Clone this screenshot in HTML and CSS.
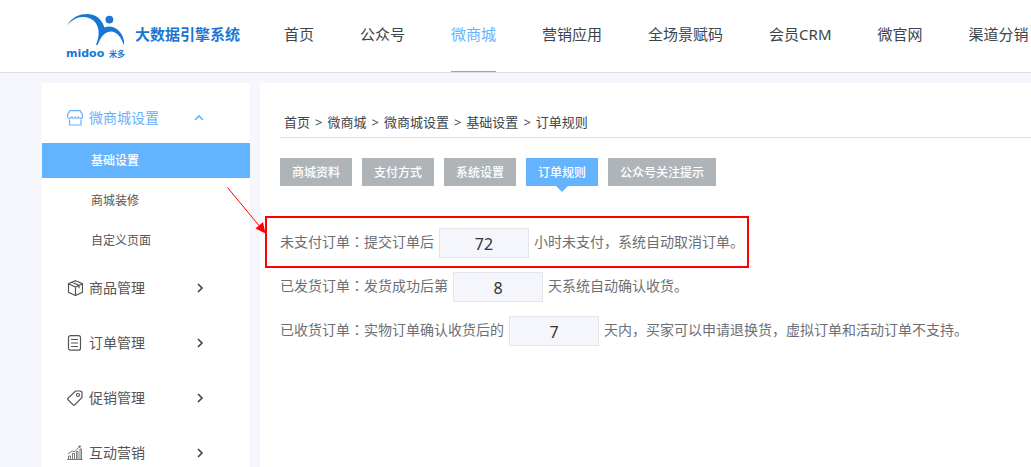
FILE: index.html
```html
<!DOCTYPE html>
<html lang="zh-CN">
<head>
<meta charset="utf-8">
<title>大数据引擎系统</title>
<link rel="stylesheet" href="styles.css">
</head>
<body>
<div class="app">
  <header class="header">
    <a class="brand" href="#">
      <svg class="logo" viewBox="0 0 60 46" role="img" aria-label="midoo 米多">
        <path class="logo-mark" d="M0 12.500C5 4 12.500 1 20 1C29 1 34.500 6 37.500 14.500C42 12.500 47.500 13.500 51.500 17.500C56 22 57.600 27 57 32.500C54.500 25 50.500 18.500 43.500 18.500C37 19 34 24 30.500 32H29C31 27 32 22.500 31.500 17.500C30.500 9.500 25 4 16 4C9.500 4 5 7 0 12.500Z"/>
        <circle class="logo-mark" cx="42.400" cy="6.600" r="3.900"/>
        <text class="logo-word" x="-1" y="44">midoo</text>
        <text class="logo-cn" x="42" y="44">米多</text>
      </svg>
      <span class="brand-name">大数据引擎系统</span>
    </a>
    <nav class="nav">
      <a href="#">首页</a>
      <a href="#">公众号</a>
      <a class="current" href="#">微商城</a>
      <a href="#">营销应用</a>
      <a href="#">全场景赋码</a>
      <a href="#">会员CRM</a>
      <a href="#">微官网</a>
      <a href="#">渠道分销</a>
    </nav>
  </header>
  <div class="body">
    <aside class="sidebar">
      <a class="group open" href="#">
        <svg class="icon" viewBox="0 0 16 16"><path d="M3 .7h10l2.500 4v1.800c0 2.500-3.800 2.500-4.200 0c-.5 2.300-3 2.300-3.300 0c-.3 2.300-2.800 2.300-3.300 0c-.4 2.500-4.200 2.500-4.200 0v-1.800zM2.500 9.500v5.500h11.500V9.500"/></svg>
        <span>微商城设置</span>
        <svg class="chevron" viewBox="0 0 10 10"><path d="M1 7l4-4 4 4"/></svg>
      </a>
      <div class="sub">
        <a class="selected" href="#">基础设置</a>
        <a href="#">商城装修</a>
        <a href="#">自定义页面</a>
      </div>
      <a class="group" href="#">
        <svg class="icon" viewBox="0 0 16 16"><path d="M8.500.7l7 3v8.600l-7 3.200-7-3.200V3.700zM1.500 3.700l7 3.300 7-3.300M8.500 7v8.500M5 2.200l7 3.200v2.800"/></svg>
        <span>商品管理</span>
        <svg class="chevron" viewBox="0 0 10 10"><path d="M4 1l4 4-4 4"/></svg>
      </a>
      <a class="group" href="#">
        <svg class="icon" viewBox="0 0 16 16"><rect x="1.500" y=".7" width="12" height="14.500" rx="2"/><path d="M4 4.500h7M4 8h7M4 11.500h7"/></svg>
        <span>订单管理</span>
        <svg class="chevron" viewBox="0 0 10 10"><path d="M4 1l4 4-4 4"/></svg>
      </a>
      <a class="group" href="#">
        <svg class="icon" viewBox="0 0 16 16"><path d="M8.500 1h5l1.500 1v5.500L7.500 15.200h-1L.7 9.500v-1z"/><circle cx="11" cy="5" r="1.500"/></svg>
        <span>促销管理</span>
        <svg class="chevron" viewBox="0 0 10 10"><path d="M4 1l4 4-4 4"/></svg>
      </a>
      <a class="group" href="#">
        <svg class="icon thin" viewBox="0 0 16 16"><path d="M0 14.500h15.500M1.500 14v-3h2v3M5.500 14V8.500h2V14M9.500 14V6.500h1.500V14M13 14V4h1.500v10M1 9l4-3 3 .500L13 1"/><circle cx="12.800" cy="1.500" r=".8"/></svg>
        <span>互动营销</span>
        <svg class="chevron" viewBox="0 0 10 10"><path d="M4 1l4 4-4 4"/></svg>
      </a>
    </aside>
    <main class="main">
      <div class="crumbs">
        <a href="#">首页</a><span>&gt;</span><a href="#">微商城</a><span>&gt;</span><a href="#">微商城设置</a><span>&gt;</span><a href="#">基础设置</a><span>&gt;</span><a href="#">订单规则</a>
      </div>
      <div class="tabs">
        <button type="button">商城资料</button>
        <button type="button">支付方式</button>
        <button type="button">系统设置</button>
        <button type="button" class="active">订单规则</button>
        <button type="button">公众号关注提示</button>
      </div>
      <form class="rules">
        <div class="rule">
          <label for="unpaid">未支付订单<span class="colon" lang="zh-TW">：</span>提交订单后</label>
          <input id="unpaid" type="text" value="72">
          <span>小时未支付，系统自动取消订单。</span>
          <div class="callout">
            <svg class="arrow" viewBox="0 0 40 48"><path class="arrow-line" d="M.5 1.500L34 42"/><path class="arrow-head" d="M38.500 47.500L28.500 42.500L36 36Z"/></svg>
          </div>
        </div>
        <div class="rule">
          <label for="shipped">已发货订单<span class="colon" lang="zh-TW">：</span>发货成功后第</label>
          <input id="shipped" type="text" value="8">
          <span>天系统自动确认收货。</span>
        </div>
        <div class="rule">
          <label for="received">已收货订单<span class="colon" lang="zh-TW">：</span>实物订单确认收货后的</label>
          <input id="received" type="text" value="7">
          <span>天内，买家可以申请退换货，虚拟订单和活动订单不支持。</span>
        </div>
      </form>
    </main>
  </div>
</div>
</body>
</html>
```
FILE: styles.css
```css
* {
  box-sizing: border-box;
}

body {
  margin: 0;
  background: #f6f7fc;
  color: #3d444d;
  font-family: "Noto Sans", "Noto Sans CJK SC", sans-serif;
  font-size: 14px;
}

a {
  color: inherit;
  text-decoration: none;
}

.app {
  display: flex;
  flex-direction: column;
  height: 100vh;
  overflow: hidden;
}

.header {
  display: flex;
  flex: none;
  height: 73px;
  padding-left: 67px;
  background: #fff;
  border-bottom: 1px solid #dcdfe3;
}

.brand {
  display: flex;
  flex: none;
  align-items: flex-start;
  gap: 8px;
  margin-right: 44px;
  color: #1b76d2;
}

.logo {
  width: 60px;
  height: 46px;
  margin-top: 13px;
  overflow: visible;
}

.logo-mark {
  fill: #1877d5;
}

.logo-word {
  fill: #1877d5;
  font: bold 11px "DejaVu Sans", sans-serif;
}

.logo-cn {
  fill: #1877d5;
  font: bold 8px "Noto Sans CJK SC", sans-serif;
}

.brand-name {
  font-size: 15px;
  font-weight: bold;
  line-height: 68px;
}

.nav {
  display: flex;
  gap: 46px;
  font-size: 15px;
  line-height: 68px;
  white-space: nowrap;
}

.nav a {
  height: 72px;
}

.nav .current {
  color: #64b3ff;
  border-bottom: 1px solid #64b3ff;
}

.body {
  display: flex;
  flex: 1;
  gap: 10px;
  min-height: 0;
  padding: 10px 0 0 42px;
}

.sidebar {
  display: flex;
  flex: none;
  flex-direction: column;
  gap: 5px;
  width: 208px;
  padding-top: 10px;
  overflow: hidden;
  background: #fff;
  color: #555;
}

.group {
  display: flex;
  flex: none;
  align-items: center;
  gap: 6px;
  height: 50px;
  padding: 0 46px 0 25px;
}

.group span {
  padding-bottom: 2px;
}

.group.open {
  margin-bottom: -5px;
  color: #64b3ff;
}

.icon {
  width: 16px;
  height: 16px;
  fill: none;
  stroke: currentColor;
  stroke-width: 1.2;
}

.thin {
  stroke-width: 0.8;
}

.chevron {
  width: 10px;
  height: 10px;
  margin-left: auto;
  fill: none;
  stroke: #3d444d;
  stroke-width: 1.6;
}

.open .chevron {
  stroke: #64b3ff;
}

.sub {
  display: flex;
  flex: none;
  flex-direction: column;
  gap: 5px;
  font-size: 12px;
  line-height: 35px;
}

.sub a {
  padding-left: 49px;
}

.sub .selected {
  background: #64b3ff;
  color: #fff;
  font-weight: 500;
}

.main {
  flex: 1;
  min-width: 0;
  padding: 24px 0 0 20px;
  background: #fff;
}

.crumbs {
  display: flex;
  gap: 5px;
  padding: 0 4px;
  border-bottom: 1px solid #dcdfe3;
  font-size: 13px;
  line-height: 30px;
}

.tabs {
  display: flex;
  gap: 10px;
  margin-top: 20px;
}

.tabs button {
  position: relative;
  height: 28px;
  padding: 0 12px;
  border: 0;
  background: #afb4b8;
  color: #fff;
  font: 500 12px "Noto Sans", "Noto Sans CJK SC", sans-serif;
}

.tabs .active {
  background: #64b3ff;
}

.tabs .active::after {
  content: "";
  position: absolute;
  top: 100%;
  left: 50%;
  margin-left: -6px;
  border: 6px solid transparent;
  border-top-color: #64b3ff;
  border-bottom: 0;
}

.rules {
  display: flex;
  flex-direction: column;
  align-items: flex-start;
  gap: 14px;
  margin-top: 42px;
  color: #6c7075;
}

.rule {
  position: relative;
  display: flex;
  gap: 5px;
  line-height: 28px;
  white-space: nowrap;
}

.colon {
  font-family: "Noto Sans CJK TC", sans-serif;
  line-height: 1;
}

.rule input {
  width: 90px;
  height: 30px;
  padding: 2px 0 0;
  border: 1px solid #e3e5ea;
  background: #f5f6fb;
  color: #333;
  font: 16px "Noto Sans", sans-serif;
  text-align: center;
}

.callout {
  position: absolute;
  inset: -12px -5px -10px -15px;
  border: 2px solid #f00;
  pointer-events: none;
}

.arrow {
  position: absolute;
  top: -32px;
  right: 100%;
  width: 40px;
  height: 48px;
}

.arrow-line {
  fill: none;
  stroke: #f00;
}

.arrow-head {
  fill: #f00;
}
```
